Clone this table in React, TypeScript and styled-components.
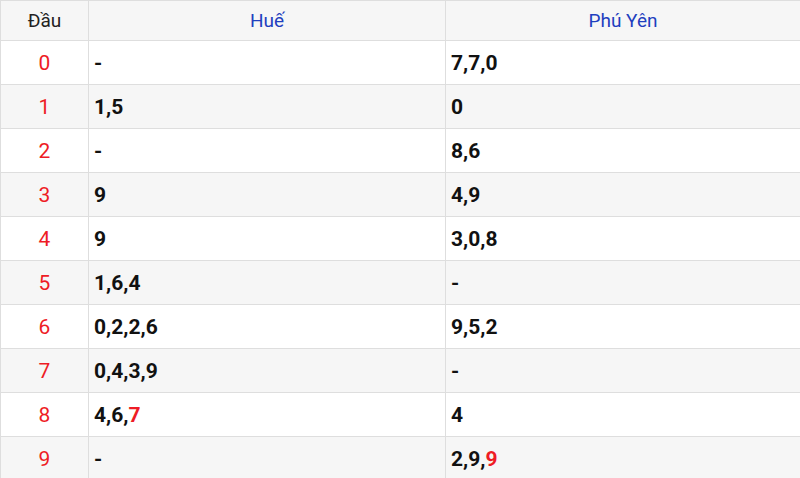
import React from "react";
import styled, { createGlobalStyle } from "styled-components";

const Global = createGlobalStyle`
  html, body { margin: 0; padding: 0; background: #fff; }
  body { font-family: Roboto, "Noto Sans", Arial, sans-serif; }
`;

const Table = styled.table`
  width: 800px;
  border-collapse: collapse;
  table-layout: fixed;
`;

const HeadCell = styled.th<{ $blue?: boolean }>`
  height: 39px;
  padding: 0;
  background: #f6f6f6;
  border: 1px solid #dedede;
  font-weight: 400;
  font-size: 19px;
  color: ${(p) => (p.$blue ? "#1f3fbf" : "#222")};
  text-align: center;
  vertical-align: middle;
`;

const Row = styled.tr<{ $alt: boolean }>`
  background: ${(p) => (p.$alt ? "#f6f6f6" : "#fff")};
`;

const HeadNum = styled.td`
  height: 43px;
  padding: 0;
  border: 1px solid #dedede;
  text-align: center;
  color: #ee1c25;
  font-size: 21px;
  font-weight: 400;
`;

const Cell = styled.td`
  height: 43px;
  padding: 0 0 0 5px;
  border: 1px solid #dedede;
  color: #111;
  font-size: 21px;
  font-weight: 700;
`;

const Hot = styled.span`
  color: #ee1c25;
`;

type V = string;
const data: [V, V][] = [
  ["-", "7,7,0"],
  ["1,5", "0"],
  ["-", "8,6"],
  ["9", "4,9"],
  ["9", "3,0,8"],
  ["1,6,4", "-"],
  ["0,2,2,6", "9,5,2"],
  ["0,4,3,9", "-"],
  ["4,6,*7", "4"],
  ["-", "2,9,*9"],
];

const render = (v: string) => {
  const parts = v.split(",");
  return parts.map((p, i) => (
    <React.Fragment key={i}>
      {p.startsWith("*") ? <Hot>{p.slice(1)}</Hot> : p}
      {i < parts.length - 1 ? "," : ""}
    </React.Fragment>
  ));
};

export default function App() {
  return (
    <>
      <Global />
      <Table>
        <colgroup>
          <col style={{ width: 88 }} />
          <col style={{ width: 357 }} />
          <col style={{ width: 355 }} />
        </colgroup>
        <thead>
          <tr>
            <HeadCell>Đầu</HeadCell>
            <HeadCell $blue>Huế</HeadCell>
            <HeadCell $blue>Phú Yên</HeadCell>
          </tr>
        </thead>
        <tbody>
          {data.map((r, i) => (
            <Row key={i} $alt={i % 2 === 1}>
              <HeadNum>{i}</HeadNum>
              <Cell>{render(r[0])}</Cell>
              <Cell>{render(r[1])}</Cell>
            </Row>
          ))}
        </tbody>
      </Table>
    </>
  );
}
